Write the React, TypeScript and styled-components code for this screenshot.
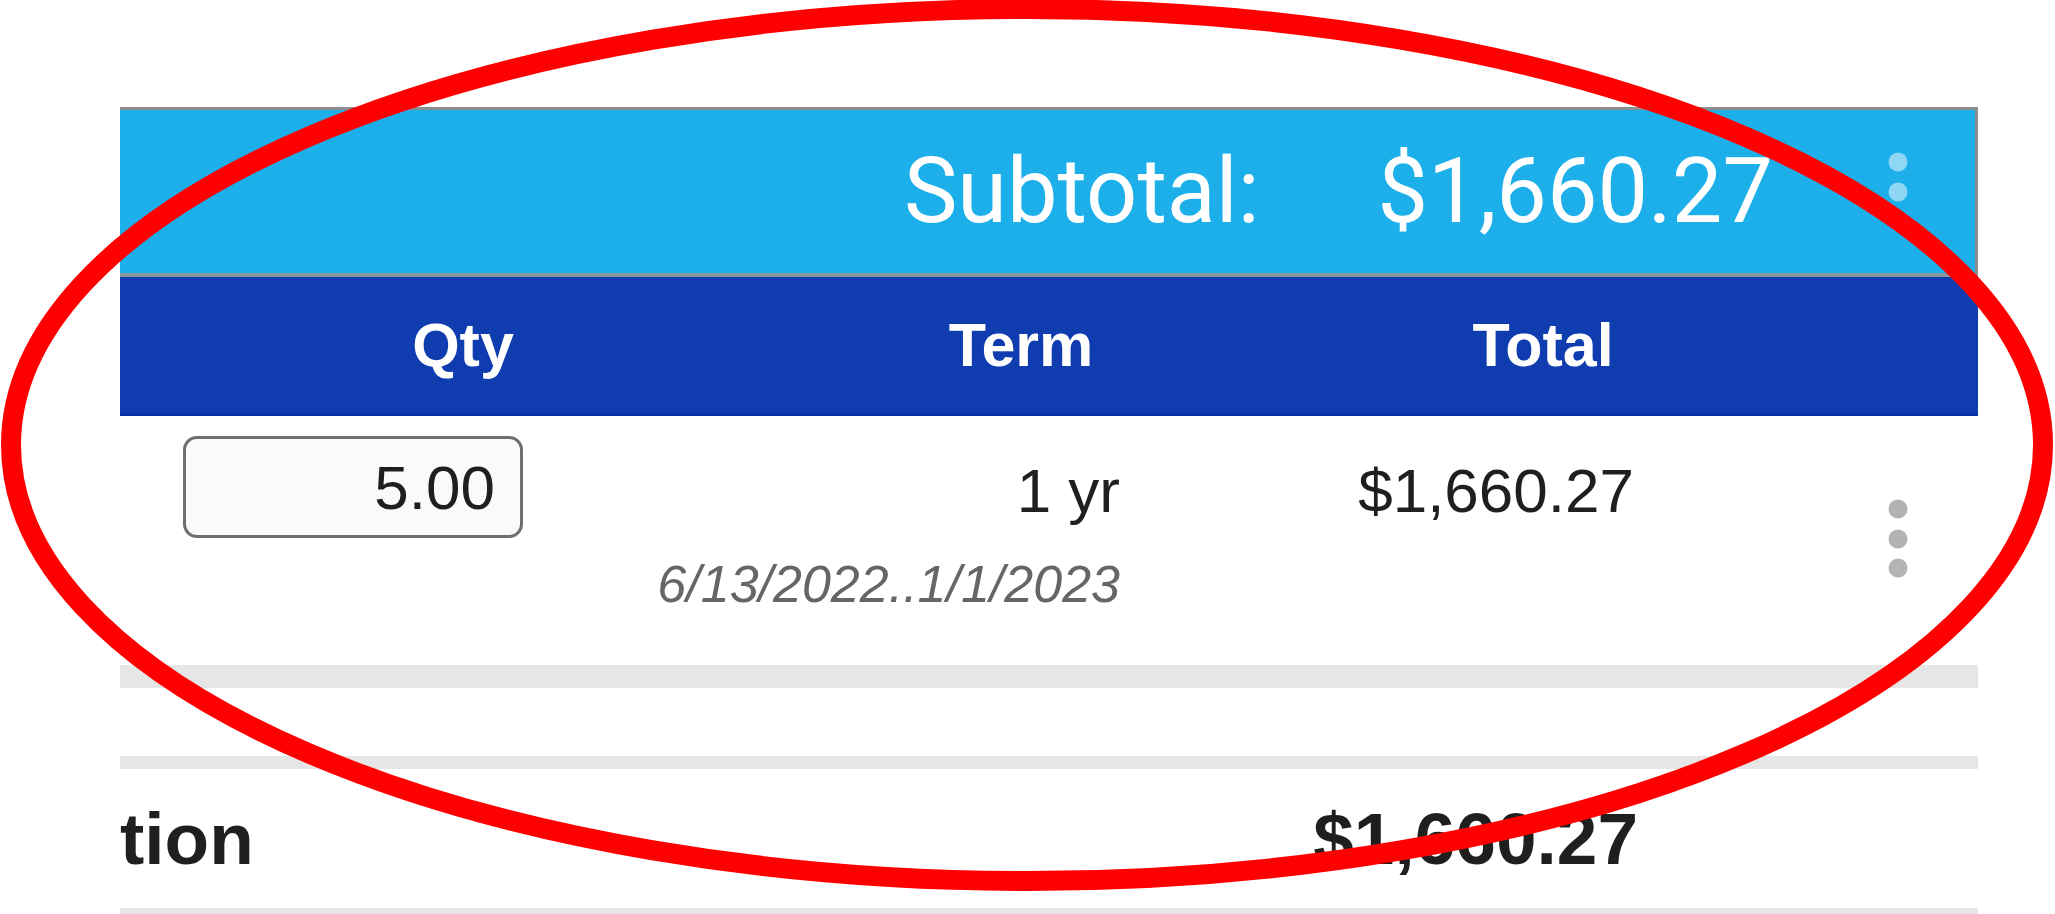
import styled, { createGlobalStyle } from 'styled-components';

const GlobalStyle = createGlobalStyle`
  html, body {
    margin: 0;
    padding: 0;
    background: #fff;
  }
  body {
    font-family: "Liberation Sans", Arial, sans-serif;
    overflow: hidden;
  }
  #root {
    position: relative;
    width: 2055px;
    height: 914px;
    overflow: hidden;
  }
`;

const Page = styled.div`
  box-sizing: border-box;
  height: 914px;
  padding: 107px 0 0 120px;
`;

const Panel = styled.section`
  width: 1858px;
  overflow: hidden;
  color: #1f1f1f;
`;

const SubtotalBar = styled.div`
  display: flex;
  align-items: center;
  justify-content: flex-end;
  height: 163px;
  padding-right: 67px;
  background: #1dafea;
  border-top: 3px solid #8d8d8d;
  border-right: 3px solid #8d8d8d;
  border-bottom: 4px solid #8b98a3;
  color: #fff;
  font-family: Roboto, "Liberation Sans", sans-serif;
  font-size: 90px;
  line-height: 1;
`;

const SubtotalAmount = styled.span`
  margin-left: 118px;
`;

const MenuButton = styled.button<{ $tone: 'light' | 'muted' }>`
  display: flex;
  padding: 0;
  border: 0;
  background: none;
  color: ${(p) => (p.$tone === 'light' ? 'rgba(255, 255, 255, 0.5)' : '#b3b3b3')};
  cursor: pointer;
`;

const BarMenu = styled(MenuButton)`
  margin-left: 115px;
  align-self: flex-start;
  margin-top: 42px;
`;

const Grid = styled.div<{ $columns: string }>`
  display: grid;
  grid-template-columns: ${(p) => p.$columns};
`;

const HeaderRow = styled(Grid)`
  height: 136px;
  align-items: center;
  background: #0f3caf;
  border-bottom: 3px solid #0633a6;
  color: #fff;
  font-size: 61px;
  font-weight: 700;
  line-height: 1;
`;

const HeaderCell = styled.div`
  text-align: center;
`;

const ItemRow = styled(Grid)`
  height: 249px;
  align-items: start;
  font-size: 62px;
  line-height: 1;
`;

const QtyInput = styled.input`
  box-sizing: border-box;
  width: 340px;
  height: 102px;
  margin: 20px 0 0 63px;
  padding: 0 25px 0 0;
  border: 3px solid #6f6f6f;
  border-radius: 14px;
  background: #fafafa;
  color: #1f1f1f;
  font-family: "Liberation Sans", Arial, sans-serif;
  font-size: 62px;
  text-align: right;
  outline: none;
`;

const TermCell = styled.div`
  display: flex;
  flex-direction: column;
  align-items: flex-end;
  justify-self: end;
  padding: 44px 20px 0 0;
`;

const TermDates = styled.span`
  margin-top: 36px;
  color: #666;
  font-size: 52px;
  font-style: italic;
`;

const AmountCell = styled.div`
  justify-self: end;
  padding: 44px 26px 0 0;
`;

const RowMenu = styled(MenuButton)`
  justify-self: end;
  margin: 83px 70px 0 0;
`;

const Band = styled.div<{ $size: number; $gap?: number }>`
  height: ${(p) => p.$size}px;
  margin-bottom: ${(p) => p.$gap ?? 0}px;
  background: #e6e6e6;
`;

const TotalRow = styled(Grid)`
  height: 139px;
  align-items: center;
  padding-right: 340px;
  font-size: 73px;
  font-weight: 700;
  line-height: 1;
`;

const TotalValue = styled.div`
  justify-self: end;
`;

const Annotation = styled.svg`
  position: absolute;
  top: 0;
  left: 0;
  pointer-events: none;
`;

const Kebab = () => (
  <svg width="20" height="80" viewBox="0 0 20 80" fill="currentColor">
    <circle cx="10" cy="10" r="9.5" />
    <circle cx="10" cy="40" r="9.5" />
    <circle cx="10" cy="69" r="9.5" />
  </svg>
);

const line = {
  qty: '5.00',
  term: '1 yr',
  dates: '6/13/2022..1/1/2023',
  total: '$1,660.27',
};

export default function App() {
  return (
    <>
      <GlobalStyle />
      <Page>
        <Panel>
          <SubtotalBar>
            <span>Subtotal:</span>
            <SubtotalAmount>$1,660.27</SubtotalAmount>
            <BarMenu $tone="light" aria-label="More">
              <Kebab />
            </BarMenu>
          </SubtotalBar>

          <HeaderRow $columns="686px 430px 614px 1fr">
            <HeaderCell>Qty</HeaderCell>
            <HeaderCell>Term</HeaderCell>
            <HeaderCell>Total</HeaderCell>
            <div />
          </HeaderRow>

          <ItemRow $columns="440px 580px 520px 1fr">
            <QtyInput defaultValue={line.qty} />
            <TermCell>
              <span>{line.term}</span>
              <TermDates>{line.dates}</TermDates>
            </TermCell>
            <AmountCell>{line.total}</AmountCell>
            <RowMenu $tone="muted" aria-label="Line actions">
              <Kebab />
            </RowMenu>
          </ItemRow>

          <Band $size={23} $gap={68} />
          <Band $size={13} />

          <TotalRow $columns="1fr auto">
            <div>tion</div>
            <TotalValue>$1,660.27</TotalValue>
          </TotalRow>
          <Band $size={10} />
        </Panel>
      </Page>

      <Annotation width="2055" height="914" viewBox="0 0 2055 914">
        <ellipse cx="1027" cy="445" rx="1016" ry="436" fill="none" stroke="#ff0000" strokeWidth="20" />
      </Annotation>
    </>
  );
}
